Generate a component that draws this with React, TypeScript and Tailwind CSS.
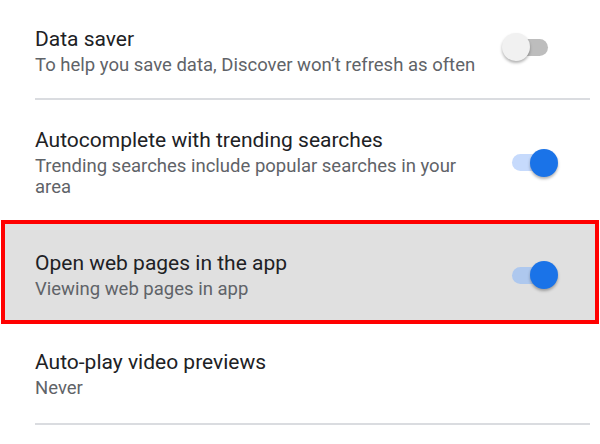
import React from "react";

function Toggle({ on, dim }: { on: boolean; dim?: boolean }) {
  return (
    <div className="relative w-[56px] h-[28px] flex items-center">
      <div
        className={
          "absolute left-[10px] right-[10px] h-[17px] rounded-full " +
          (on ? (dim ? "bg-[#aec8ee]" : "bg-[#c6dafc]") : "bg-[#bdbdbd]")
        }
      />
      <div
        className={
          "absolute top-[0px] w-[28px] h-[28px] rounded-full shadow-[0_2px_3px_rgba(0,0,0,0.3)] " +
          (on ? "right-[0px] bg-[#1a73e8]" : "left-[0px] bg-[#f1f1f1]")
        }
      />
    </div>
  );
}

function Row({
  title,
  sub,
  toggle,
  dim,
  up,
}: {
  title: string;
  sub: string;
  toggle?: boolean;
  dim?: boolean;
  up?: boolean;
}) {
  return (
    <div className="flex items-center">
      <div className="w-[450px] flex flex-col">
        <div className="text-[21px] leading-[26px] text-[#202124]">{title}</div>
        <div className="mt-[3px] text-[18.5px] leading-[21px] text-[#5f6368]">{sub}</div>
      </div>
      {toggle !== undefined && (
        <div className={"ml-[17px] " + (up ? "mb-[8px]" : "")}>
          <Toggle on={toggle} dim={dim} />
        </div>
      )}
    </div>
  );
}

export default function App() {
  return (
    <div
      className="w-[600px] h-[444px] bg-white overflow-hidden"
      style={{ fontFamily: "Roboto, 'Liberation Sans', sans-serif" }}
    >
      <div className="pl-[35px] pr-[10px] pt-[26px] pb-[22px]">
        <Row
          title="Data saver"
          sub="To help you save data, Discover won’t refresh as often"
          toggle={false}
          up
        />
      </div>
      <div className="ml-[35px] mr-[10px] h-[2px] bg-[#dadce0]" />
      <div className="pl-[35px] pr-[10px] pt-[27px] pb-[22px]">
        <Row
          title="Autocomplete with trending searches"
          sub="Trending searches include popular searches in your area"
          toggle={true}
        />
      </div>
      <div className="mx-[1px] border-4 border-[#ff0000] bg-[#e0e0e0] pl-[30px] pr-[6px] pt-[26px] pb-[20px]">
        <Row
          title="Open web pages in the app"
          sub="Viewing web pages in app"
          toggle={true}
          dim
        />
      </div>
      <div className="pl-[35px] pr-[10px] pt-[25px] pb-[24px]">
        <Row title="Auto-play video previews" sub="Never" />
      </div>
      <div className="ml-[35px] mr-[10px] h-[2px] bg-[#dadce0]" />
    </div>
  );
}
